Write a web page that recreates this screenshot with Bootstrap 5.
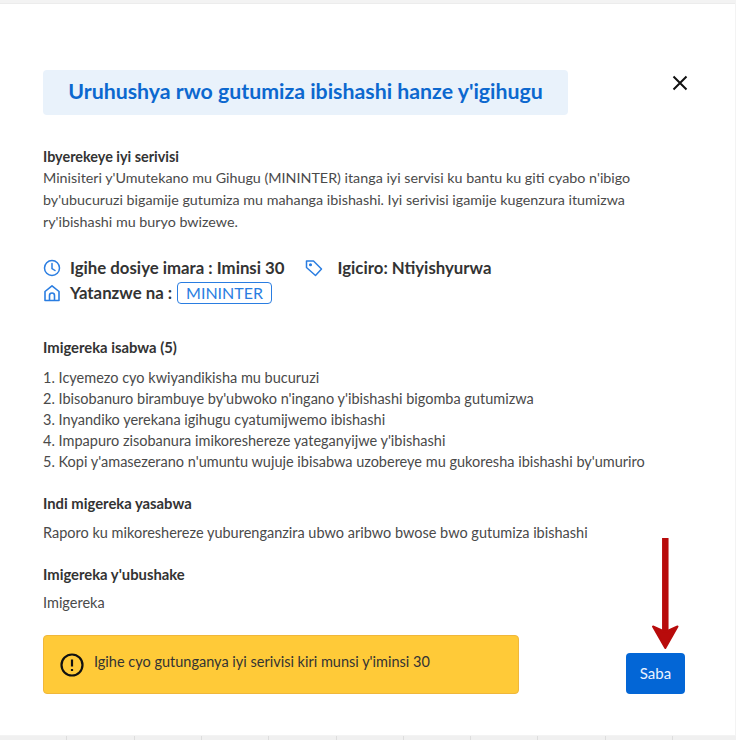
<!DOCTYPE html>
<html lang="en">
<head>
    <meta charset="UTF-8">
    <title>Uruhushya rwo gutumiza ibishashi</title>
    <link href="https://cdn.jsdelivr.net/npm/bootstrap@5.3.0/dist/css/bootstrap.min.css" rel="stylesheet">
    <script src="https://cdn.jsdelivr.net/npm/bootstrap@5.3.0/dist/js/bootstrap.bundle.min.js"></script>
    <style>
        html, body {
            height: 740px;
            overflow: hidden;
        }
        body {
            background: #f3f3f3;
            font-family: "Lato", "Open Sans", sans-serif;
            color: #4a4a4a;
            font-size: 14.5px;
        }
        .sheet {
            background: #fff;
            height: 732px;
            margin-top: 3px;
            border-top: 1px solid #ececec;
            padding: 66px 50px 0 43px;
            margin-right: 1px;
        }
        .title-box {
            background: #e9f2fb;
            color: #0c68cf;
            width: 525px;
            height: 45px;
            border-radius: 4px;
            font-size: 21.3px;
            font-weight: 700;
            padding-bottom: 2px;
        }
        .close-x {
            width: 16px;
            height: 16px;
            margin-right: -3px;
            margin-top: 5px;
        }
        .intro-block { margin-top: 31px; }
        .sec-title {
            font-weight: 700;
            color: #333;
            font-size: 14.8px;
            line-height: 21px;
        }
        .intro-block .sec-title { font-size: 14.4px; }
        .body-line {
            line-height: 22px;
            font-size: 14.3px;
        }
        .facts {
            margin-top: 22px;
            font-size: 16.8px;
            font-weight: 700;
            color: #333;
            line-height: 25px;
        }
        .fact-ico {
            width: 18px;
            height: 18px;
            flex: none;
            margin-right: 9px;
        }
        .tag-ico {
            margin-left: 20px;
            margin-right: 15px;
        }
        .fact-label { margin-right: 5px; }
        .org-tag {
            border: 1px solid #2a7de1;
            border-radius: 4px;
            color: #2a7de1;
            font-weight: 400;
            font-size: 16px;
            padding: 0 8px;
            height: 22px;
        }
        .req-title { margin-top: 32px; }
        .req-list { line-height: 21px; margin-top: 9px; }
        .extra-title { margin-top: 21px; }
        .extra-text { margin-top: 8px; line-height: 21px; }
        .optional-title { margin-top: 21px; }
        .optional-text { margin-top: 7px; line-height: 21px; }
        .foot-row { margin-top: 22px; }
        .notice {
            background: #ffca38;
            border: 1px solid #f0b73a;
            border-radius: 4px;
            width: 476px;
            height: 59px;
            color: #333;
            padding-left: 16px;
        }
        .notice-ico { margin-right: 10px; flex: none; }
        .notice-text { padding-bottom: 6px; }
        .saba {
            background: #0366d6;
            color: #eaf3ff;
            width: 59px;
            height: 41px;
            border-radius: 4px;
            border: 0;
            font-size: 15px;
            padding: 0;
        }
        .red-arrow {
            position: absolute;
            left: 650px;
            top: 538px;
        }
        .bottom-row {
            position: absolute;
            left: 0;
            right: 0;
            top: 736px;
            height: 4px;
            background: repeating-linear-gradient(90deg, #f0f0f0 0 66.3px, #ddd 66.3px 67.3px);
        }
    </style>
</head>
<body>
    <div class="sheet">
        <div class="d-flex justify-content-between align-items-start">
            <div class="title-box d-flex align-items-center justify-content-center">Uruhushya rwo gutumiza ibishashi hanze y'igihugu</div>
            <svg class="close-x" viewBox="0 0 16 16"><path d="M1.5 1.5l13 13M14.5 1.5l-13 13" stroke="#111" stroke-width="2" fill="none"/></svg>
        </div>

        <div class="intro-block">
            <div class="sec-title">Ibyerekeye iyi serivisi</div>
            <div class="body-line">Minisiteri y'Umutekano mu Gihugu (MININTER) itanga iyi servisi ku bantu ku giti cyabo n'ibigo<br>by'ubucuruzi bigamije gutumiza mu mahanga ibishashi. Iyi serivisi igamije kugenzura itumizwa<br>ry'ibishashi mu buryo bwizewe.</div>
        </div>

        <div class="facts">
            <div class="d-flex align-items-center">
                <svg class="fact-ico" viewBox="0 0 18 18" fill="none" stroke="#2a7de1" stroke-width="1.5"><circle cx="9" cy="9" r="7.5"/><path d="M9 4.5V9.5L12 11.5" stroke-linecap="round"/></svg>
                <span>Igihe dosiye imara : Iminsi 30</span>
                <svg class="fact-ico tag-ico" viewBox="0 0 18 18" fill="none" stroke="#2a7de1" stroke-width="1.5" stroke-linejoin="round"><path d="M1.5 2h7L16.500 10l-6 6.500-9-8z"/><circle cx="5.500" cy="5.800" r=".8"/></svg>
                <span>Igiciro: Ntiyishyurwa</span>
            </div>
            <div class="d-flex align-items-center">
                <svg class="fact-ico" viewBox="0 0 18 18" fill="none" stroke="#2a7de1" stroke-width="1.6" stroke-linejoin="round"><path d="M2 7.500L9 1.800l7 5.700V16.500H2z"/><path d="M6.500 16.500v-5a2.500 2.500 0 0 1 5 0v5"/></svg>
                <span class="fact-label">Yatanzwe na :</span>
                <span class="org-tag d-inline-flex align-items-center">MININTER</span>
            </div>
        </div>

        <div class="sec-title req-title">Imigereka isabwa (5)</div>
        <div class="req-list">
            <div>1. Icyemezo cyo kwiyandikisha mu bucuruzi</div>
            <div>2. Ibisobanuro birambuye by'ubwoko n'ingano y'ibishashi bigomba gutumizwa</div>
            <div>3. Inyandiko yerekana igihugu cyatumijwemo ibishashi</div>
            <div>4. Impapuro zisobanura imikoreshereze yateganyijwe y'ibishashi</div>
            <div>5. Kopi y'amasezerano n'umuntu wujuje ibisabwa uzobereye mu gukoresha ibishashi by'umuriro</div>
        </div>

        <div class="sec-title extra-title">Indi migereka yasabwa</div>
        <div class="extra-text">Raporo ku mikoreshereze yuburenganzira ubwo aribwo bwose bwo gutumiza ibishashi</div>

        <div class="sec-title optional-title">Imigereka y'ubushake</div>
        <div class="optional-text">Imigereka</div>

        <div class="foot-row d-flex justify-content-between align-items-end">
            <div class="notice d-flex align-items-center">
                <svg class="notice-ico" width="24" height="24" viewBox="0 0 24 24" fill="none" stroke="#111" stroke-width="2.2"><circle cx="12" cy="12" r="10.500"/><path d="M12 6.500v7M12 16v2"/></svg>
                <span class="notice-text">Igihe cyo gutunganya iyi serivisi kiri munsi y'iminsi 30</span>
            </div>
            <button class="btn saba">Saba</button>
        </div>
    </div>
    <svg class="red-arrow" width="30" height="112" viewBox="0 0 30 112"><path d="M15.300 0V100" stroke="#b80b0b" stroke-width="6.500"/><path d="M3 88.500L15.300 94 27.500 88.500 15.300 110z" fill="#b80b0b" stroke="#b80b0b" stroke-width="2" stroke-linejoin="round"/></svg>
    <div class="bottom-row"></div>
</body>
</html>
